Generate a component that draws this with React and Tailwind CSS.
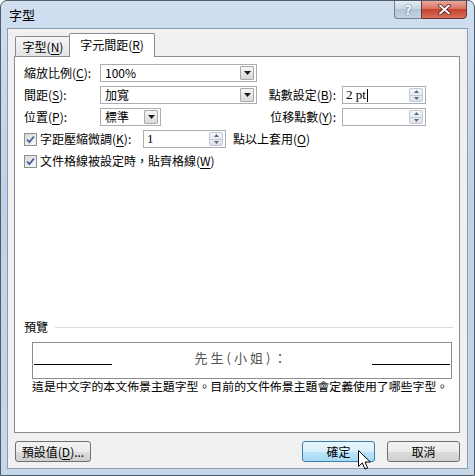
const U = ({ children }) => <span className="underline underline-offset-[2px]">{children}</span>;

function DropBtn() {
  return (
    <div className="flex h-[14px] w-[14px] items-center justify-center rounded-[1px] border border-[#a9a9a9] bg-[linear-gradient(#f5f5f5,#d9d9d9)]">
      <svg width="7" height="4" viewBox="0 0 7 4">
        <path d="M0 0h7L3.5 4z" fill="#1e1e1e" />
      </svg>
    </div>
  );
}

function Combo({ value, width }) {
  return (
    <div className={`flex h-[18px] items-center justify-between border border-[#abadb3] bg-white pl-[4px] pr-[2px] ${width}`}>
      <span>{value}</span>
      <DropBtn />
    </div>
  );
}

function Spin({ value, width, caret }) {
  return (
    <div className={`flex h-[18px] items-center justify-between border border-[#abadb3] bg-white pl-[3px] pr-[2px] ${width}`}>
      <span className="flex items-center font-['Liberation_Serif','Noto_Sans_CJK_TC',serif] text-[13px]">
        {value}
        {caret && <span className="ml-px h-[13px] w-px bg-black" />}
      </span>
      <div className="flex h-[14px] w-[14px] flex-col overflow-hidden rounded-[2px] border border-[#c3cad4] bg-[linear-gradient(#f4f6f9,#dde3ea)]">
        <div className="flex flex-1 items-center justify-center border-b border-[#c3cad4]">
          <svg width="5" height="3" viewBox="0 0 5 3">
            <path d="M0 3h5L2.5 0z" fill="#5f6b7b" />
          </svg>
        </div>
        <div className="flex flex-1 items-center justify-center">
          <svg width="5" height="3" viewBox="0 0 5 3">
            <path d="M0 0h5L2.5 3z" fill="#5f6b7b" />
          </svg>
        </div>
      </div>
    </div>
  );
}

function Check() {
  return (
    <div className="flex h-[13px] w-[13px] shrink-0 items-center justify-center border border-[#8e8f8f] bg-[linear-gradient(135deg,#d8d8d8,#fbfbfb)]">
      <svg width="9" height="9" viewBox="0 0 9 9">
        <path d="M1 4.5l2.4 2.6L8 1.5" stroke="#4a5f97" strokeWidth="1.8" fill="none" />
      </svg>
    </div>
  );
}

function Button({ children, hover, width }) {
  return (
    <div
      className={`flex h-[21px] items-center justify-center rounded-[3px] border ${width} ${
        hover
          ? "border-[#3c7fb1] bg-[linear-gradient(#eaf6fd,#d9f0fc_50%,#bee6fd_50%,#a7d9f5)]"
          : "border-[#707070] bg-[linear-gradient(#f2f2f2,#ebebeb_50%,#dddddd_50%,#cfcfcf)]"
      }`}
    >
      {children}
    </div>
  );
}

export default function App() {
  return (
    <div className="relative flex h-[476px] w-[475px] flex-col overflow-hidden rounded-t-[7px] border border-[#4f5b68] bg-[linear-gradient(180deg,#d0def0_0%,#bfd2e7_40%,#c6d7ea_100%)] font-['Noto_Sans_CJK_TC',sans-serif] text-[12px] leading-[16px] text-black">
      {/* title bar */}
      <div className="flex h-[27px] justify-between">
        <span className="pl-[8px] pt-[6px] text-[13px]">字型</span>
        <div className="mr-[7px] flex h-[19px] -mt-px">
          <div className="flex w-[27px] items-center justify-center rounded-bl-[4px] border border-r-0 border-[#6f7f93] bg-[linear-gradient(#e4ebf3,#c5d3e3_50%,#b3c4d8_50%,#c4d4e6)] text-[13px] font-bold text-white [text-shadow:0_0_2px_#34445a]">
            ?
          </div>
          <div className="flex w-[46px] items-center justify-center rounded-br-[4px] border border-[#6e3232] bg-[linear-gradient(#e9a899,#d67463_45%,#c5432f_50%,#d9705a)]">
            <svg width="13" height="11" viewBox="0 0 13 11">
              <path d="M2 1.5l9 8M11 1.5l-9 8" stroke="#3d1010" strokeWidth="3.4" strokeLinecap="round" />
              <path d="M2 1.5l9 8M11 1.5l-9 8" stroke="#fff" strokeWidth="2" strokeLinecap="round" />
            </svg>
          </div>
        </div>
      </div>

      {/* client area */}
      <div className="mx-[6px] flex h-[441px] flex-col border border-[#8a9db3] bg-[#f0f0f0] px-[6px]">
        {/* tabs */}
        <div className="flex h-[28px] items-end pl-px">
          <div className="mb-px flex h-[20px] w-[56px] items-center justify-center rounded-t-[2px] border border-b-0 border-[#898c95] bg-[linear-gradient(#f5f5f5,#e4e4e4)]">
            字型(<U>N</U>)
          </div>
          <div className="relative z-10 -ml-[2px] flex h-[24px] w-[86px] items-center justify-center rounded-t-[2px] border border-b-0 border-[#898c95] bg-white pb-[2px]">
            字元間距(<U>R</U>)
          </div>
        </div>

        {/* panel */}
        <div className="-mt-px flex h-[377px] w-[446px] flex-col border border-[#898c95] bg-white pl-[9px] pt-[7px]">
          <div className="flex flex-col gap-[4px]">
            <div className="flex h-[18px] items-center">
              <span className="w-[76px]">縮放比例(<U>C</U>):</span>
              <Combo value="100%" width="w-[157px]" />
            </div>
            <div className="flex h-[18px] items-center">
              <span className="w-[76px]">間距(<U>S</U>):</span>
              <Combo value="加寬" width="w-[157px]" />
              <span className="w-[85px] pr-[6px] text-right">點數設定(<U>B</U>):</span>
              <Spin value="2 pt" width="w-[84px]" caret />
            </div>
            <div className="flex h-[18px] items-center">
              <span className="w-[76px]">位置(<U>P</U>):</span>
              <Combo value="標準" width="w-[61px]" />
              <span className="ml-[96px] w-[85px] pr-[6px] text-right">位移點數(<U>Y</U>):</span>
              <Spin value="" width="w-[84px]" />
            </div>
            <div className="flex h-[18px] items-center">
              <Check />
              <span className="ml-[3px] w-[103px]">字距壓縮微調(<U>K</U>):</span>
              <Spin value="1" width="w-[83px]" />
              <span className="ml-[7px]">點以上套用(<U>O</U>)</span>
            </div>
            <div className="flex h-[18px] items-center">
              <Check />
              <span className="ml-[3px]">文件格線被設定時，貼齊格線(<U>W</U>)</span>
            </div>
          </div>

          {/* preview */}
          <div className="mt-[149px] flex h-[16px] items-center pr-[6px]">
            <span>預覽</span>
            <div className="ml-[7px] h-px flex-1 bg-[#dcdcdc]" />
          </div>
          <div className="ml-[8px] mt-[7px] flex h-[37px] w-[420px] items-start justify-between border border-[#8d8d8d] px-px">
            <div className="mt-[21px] h-px w-[78px] bg-black" />
            <span className="mt-[7px] text-[13px] tracking-[3px] text-[#555555]">先生(小姐)：</span>
            <div className="mt-[21px] h-px w-[78px] bg-black" />
          </div>
          <p className="ml-[8px] whitespace-nowrap text-[11.9px] leading-[14px]">
            這是中文字的本文佈景主題字型。目前的文件佈景主題會定義使用了哪些字型。
          </p>
        </div>

        {/* buttons */}
        <div className="mt-[8px] flex w-[446px] justify-between pl-px">
          <Button width="w-[76px]">預設值(<U>D</U>)...</Button>
          <div className="flex gap-[12px]">
            <Button width="w-[73px]" hover>確定</Button>
            <Button width="w-[73px]">取消</Button>
          </div>
        </div>
      </div>

      {/* mouse pointer */}
      <svg className="absolute left-[357px] top-[449px]" width="13" height="21" viewBox="0 0 13 21">
        <path d="M0.5 0.5v16l3.8-3.6 2.7 6.2 2.6-1.1-2.6-6h5.3z" fill="#fff" stroke="#000" strokeWidth="1" strokeLinejoin="round" />
      </svg>
    </div>
  );
}
